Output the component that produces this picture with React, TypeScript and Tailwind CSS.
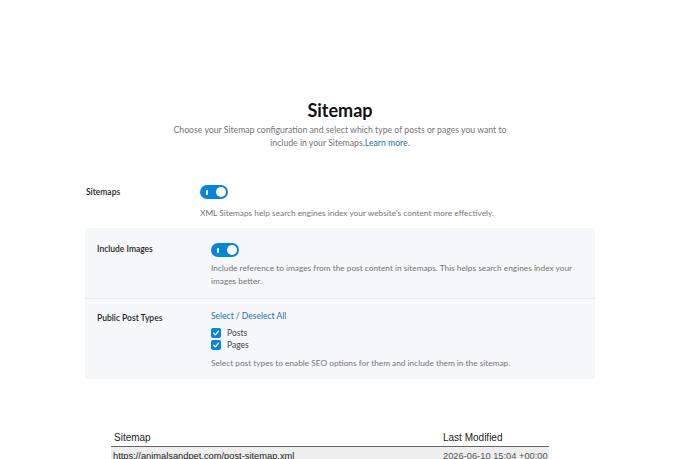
import { useState } from "react";

function Toggle({ on, onChange }: { on: boolean; onChange: () => void }) {
    return (
        <button
            type="button"
            onClick={onChange}
            className={`relative flex items-center w-[28px] h-[14px] rounded-full ${on ? "bg-[#0a84d6]" : "bg-[#c3c4c7]"}`}
        >
            <span className="absolute left-[6px] top-[4.5px] w-[1.5px] h-[5px] bg-white rounded-sm" />
            <span className={`absolute top-[2px] w-[10px] h-[10px] rounded-full bg-white ${on ? "right-[2px]" : "left-[2px]"}`} />
        </button>
    );
}

function Check({ label, checked, onChange }: { label: string; checked: boolean; onChange: () => void }) {
    return (
        <label className="flex items-center gap-[6px] h-[12px] leading-[12px] cursor-pointer">
            <span onClick={onChange} className="flex items-center justify-center w-[10px] h-[10px] rounded-[2px] bg-[#0a84d6]">
                {checked && (
                    <svg viewBox="0 0 10 10" className="w-[8px] h-[8px]">
                        <path d="M2 5.2 L4.2 7.3 L8 2.8" fill="none" stroke="white" strokeWidth="1.6" strokeLinecap="round" strokeLinejoin="round" />
                    </svg>
                )}
            </span>
            <span className="text-[8.5px] text-[#3c434a]">{label}</span>
        </label>
    );
}

export default function App() {
    const [sitemaps, setSitemaps] = useState(true);
    const [images, setImages] = useState(true);
    const [posts, setPosts] = useState(true);
    const [pages, setPages] = useState(true);

    return (
        <div className="w-[680px] h-[459px] overflow-hidden bg-white font-['Lato',sans-serif] text-[#1e1e1e]">
            <div className="pt-[98px] text-center">
                <h1 className="text-[18px] leading-[24px] font-bold text-[#111]">Sitemap</h1>
                <p className="w-[350px] mx-auto mt-[1px] text-[8.7px] leading-[13px] text-[#757575]">
                    Choose your Sitemap configuration and select which type of posts or pages you want to include in your Sitemaps.<a className="text-[#2271b1]">Learn more.</a>
                </p>
            </div>

            <div className="w-[510px] mx-auto mt-[36px]">
                <div className="flex pl-[1px] pb-[8px]">
                    <div className="w-[114px] text-[8.5px] font-semibold leading-[14px]">Sitemaps</div>
                    <div className="flex flex-col">
                        <Toggle on={sitemaps} onChange={() => setSitemaps(!sitemaps)} />
                        <p className="mt-[8px] text-[8.3px] leading-[13px] text-[#757575]">
                            XML Sitemaps help search engines index your website's content more effectively.
                        </p>
                    </div>
                </div>

                <div className="bg-[#f6f7f9]">
                    <div className="flex px-[12px] pt-[15px] pb-[10px] border-b border-[#eaebee]">
                        <div className="w-[114px] text-[8.5px] font-semibold leading-[12px]">Include Images</div>
                        <div className="flex flex-col flex-1">
                            <Toggle on={images} onChange={() => setImages(!images)} />
                            <p className="mt-[5px] text-[8.3px] leading-[13px] text-[#757575]">
                                Include reference to images from the post content in sitemaps. This helps search engines index your images better.
                            </p>
                        </div>
                    </div>
                    <div className="flex px-[12px] pt-[11px] pb-[9px]">
                        <div className="w-[114px] pt-[1px] text-[8.5px] font-semibold leading-[14px]">Public Post Types</div>
                        <div className="flex flex-col">
                            <a className="text-[8.5px] leading-[13px] text-[#2271b1] cursor-pointer">Select / Deselect All</a>
                            <div className="mt-[4px] flex flex-col">
                                <Check label="Posts" checked={posts} onChange={() => setPosts(!posts)} />
                                <Check label="Pages" checked={pages} onChange={() => setPages(!pages)} />
                            </div>
                            <p className="mt-[6px] text-[8.3px] leading-[13px] text-[#757575]">
                                Select post types to enable SEO options for them and include them in the sitemap.
                            </p>
                        </div>
                    </div>
                </div>
            </div>

            <table className="ml-[111px] mt-[50px] w-[438px] font-['Liberation_Sans',Arial,sans-serif] text-[10px] text-[#222] border-collapse">
                <thead>
                    <tr className="border-b border-[#666]">
                        <th className="text-left font-normal px-[3px] h-[17px] text-[#222]">Sitemap</th>
                        <th className="text-left font-normal px-[1px] w-[107px] whitespace-nowrap text-[#222]">Last Modified</th>
                    </tr>
                </thead>
                <tbody>
                    <tr className="bg-[#eeeeee] text-[9.3px]">
                        <td className="px-[2px] pt-[3px] pb-[1px] h-[16px] whitespace-nowrap">https://animalsandpet.com/post-sitemap.xml</td>
                        <td className="px-[1px] pt-[3px] pb-[1px] whitespace-nowrap text-[#555]">2026-06-10 15:04 +00:00</td>
                    </tr>
                </tbody>
            </table>
        </div>
    );
}
